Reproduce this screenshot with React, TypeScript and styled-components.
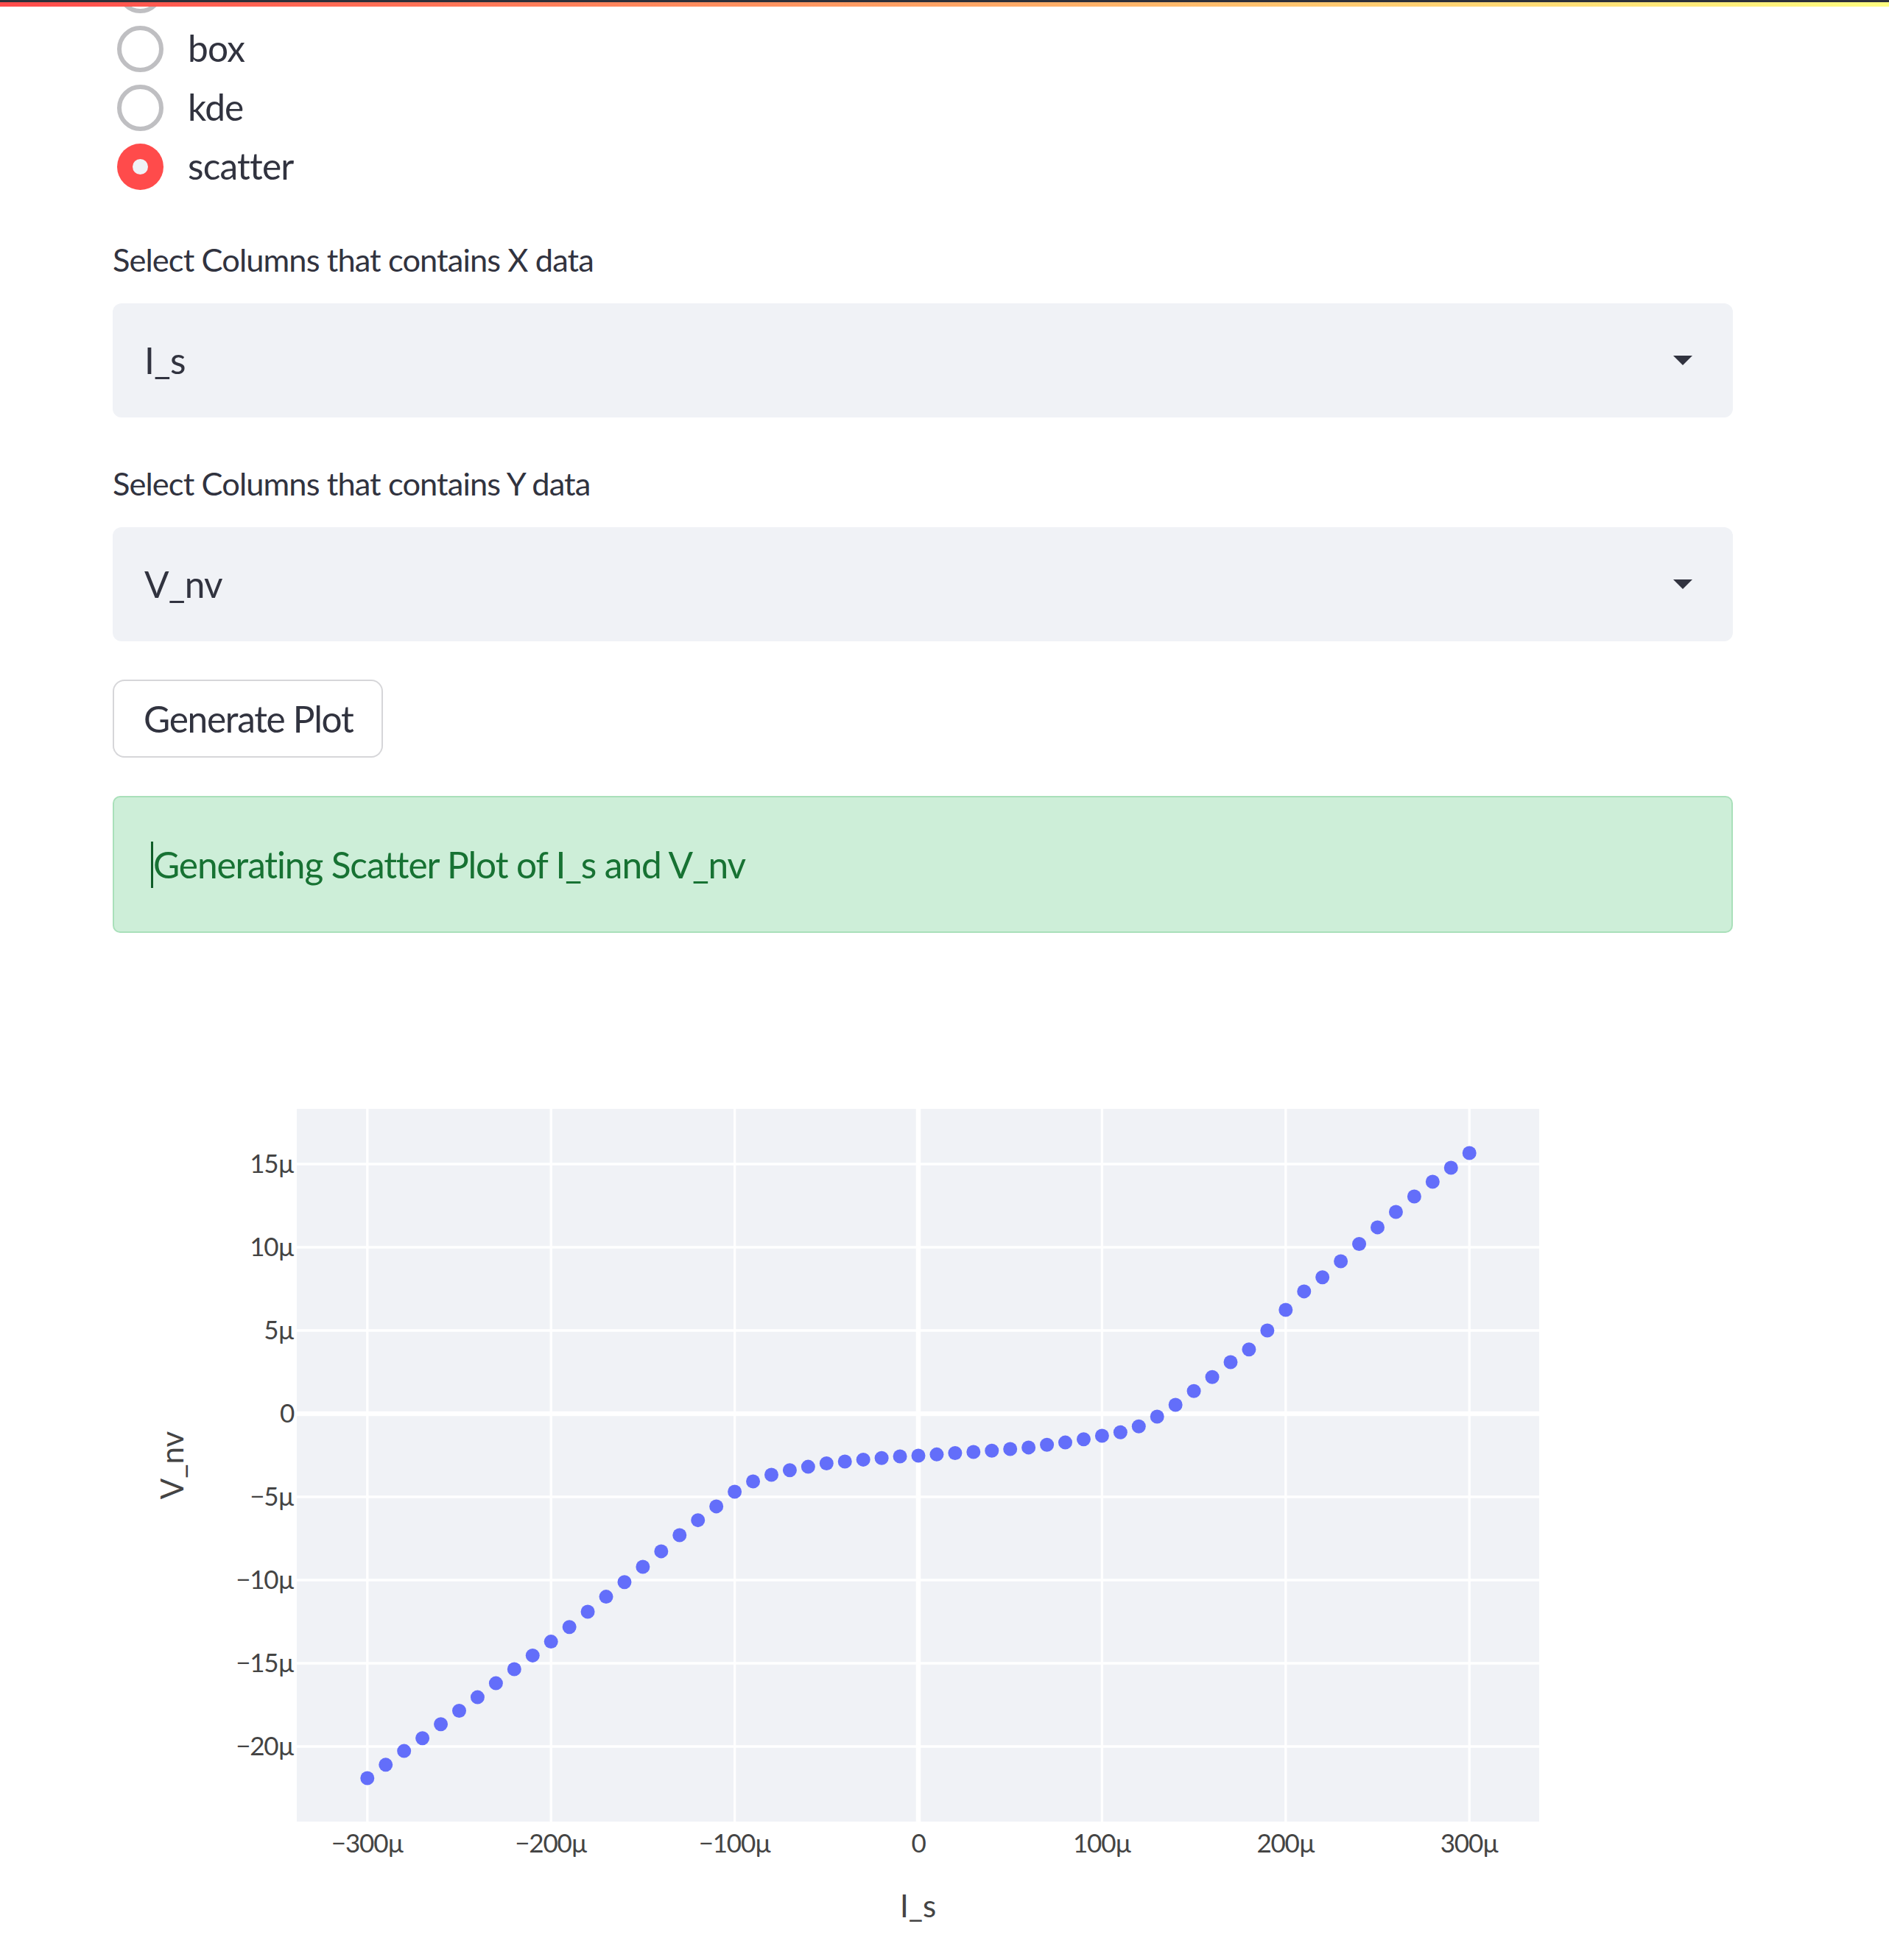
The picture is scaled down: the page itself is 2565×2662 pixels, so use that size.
import React from "react";
import styled, { createGlobalStyle } from "styled-components";

const GlobalStyle = createGlobalStyle`
  html, body { margin: 0; padding: 0; background: #ffffff; overflow: hidden; }
  body { font-family: Lato, "Liberation Sans", sans-serif; color: #31333f; }
  * { box-sizing: border-box; }
`;

const Decoration = styled.div`
  position: fixed;
  top: 0;
  left: 0;
  right: 0;
  z-index: 10;
  display: flex;
  flex-direction: column;
`;
const TopStrip = styled.div`
  height: 3px;
  background: #2e3039;
`;
const GradientStrip = styled.div`
  height: 6px;
  background: linear-gradient(90deg, #ff4b4b, #fffd80);
`;

const Main = styled.main`
  display: flex;
  flex-direction: column;
  align-items: flex-start;
  width: 2200px;
  margin-left: 153px;
`;

const RadioGroup = styled.div`
  display: flex;
  flex-direction: column;
  margin-top: -54px;
`;
const RadioItem = styled.label`
  display: flex;
  align-items: center;
  height: 80px;
  gap: 33px;
  padding-left: 6px;
  font-size: 49.6px;
  letter-spacing: -0.8px;
`;
const RadioCircle = styled.span<{ $checked?: boolean }>`
  width: 63px;
  height: 63px;
  border-radius: 50%;
  flex: none;
  display: flex;
  align-items: center;
  justify-content: center;
  background: ${(p) => (p.$checked ? "#ff4b4b" : "#ffffff")};
  border: ${(p) => (p.$checked ? "none" : "6px solid #bfbfc2")};
`;
const RadioDot = styled.span`
  width: 21px;
  height: 21px;
  border-radius: 50%;
  background: #f0f2f6;
`;
const RadioText = styled.span`
  line-height: 1;
  color: #31333f;
`;

const FieldLabel = styled.div<{ $top: number }>`
  margin-top: ${(p) => p.$top}px;
  height: 52px;
  line-height: 52px;
  font-size: 43.4px;
  letter-spacing: -0.9px;
  color: #31333f;
`;

const SelectBox = styled.div`
  margin-top: 34px;
  width: 100%;
  height: 155px;
  background: #f0f2f6;
  border-radius: 12px;
  display: flex;
  align-items: center;
  justify-content: space-between;
  padding: 0 55px 0 43px;
  font-size: 49.6px;
  letter-spacing: -0.8px;
  color: #31333f;
`;
const SelectValue = styled.span`
  line-height: 1;
`;
const CaretIcon = styled.svg`
  width: 26px;
  height: 13px;
  display: block;
`;

const Button = styled.button`
  margin-top: 52px;
  height: 106px;
  padding: 0 39px 0 40px;
  border: 2px solid rgba(49, 51, 63, 0.2);
  border-radius: 16px;
  background: #ffffff;
  font-family: inherit;
  font-size: 49.6px;
  letter-spacing: -1.3px;
  color: #31333f;
  display: inline-flex;
  align-items: center;
`;

const Alert = styled.div`
  margin-top: 52px;
  width: 100%;
  height: 186px;
  background: #cdeed8;
  border: 2px solid #a9e0ba;
  border-radius: 10px;
  padding-left: 50px;
  display: flex;
  align-items: center;
  color: #177233;
  font-size: 49.6px;
  letter-spacing: -1.1px;
`;
const TextCursor = styled.span`
  display: inline-block;
  width: 3px;
  height: 63px;
  background: #0f5d28;
`;

const Figure = styled.div`
  margin-top: 33px;
  width: 2200px;
  height: 1362px;
`;
const ChartSvg = styled.svg`
  display: block;
`;
const TickLabel = styled.text`
  font-family: Lato, "Liberation Sans", sans-serif;
  font-size: 35px;
  letter-spacing: -1.2px;
  fill: #444444;
`;
const AxisTitle = styled.text`
  font-family: Lato, "Liberation Sans", sans-serif;
  font-size: 42px;
  fill: #444444;
`;

const YS_DATA: number[] = [
  -21.9, -21.1, -20.27, -19.5, -18.66, -17.85, -17.04, -16.2, -15.35, -14.53,
  -13.7, -12.82, -11.9, -11.0, -10.12, -9.2, -8.27, -7.3, -6.4, -5.57,
  -4.69, -4.07, -3.67, -3.4, -3.19, -2.99, -2.88, -2.76, -2.67, -2.57,
  -2.52, -2.45, -2.37, -2.3, -2.22, -2.12, -2.03, -1.87, -1.73, -1.54,
  -1.33, -1.12, -0.76, -0.18, 0.53, 1.36, 2.2, 3.1, 3.86, 5.0,
  6.24, 7.35, 8.2, 9.16, 10.2, 11.2, 12.12, 13.05, 13.94, 14.78, 15.66,
];

const X0 = 1094;
const XS = 2.494;
const Y0 = 620;
const YS = 22.6;
const PLOT = { left: 250, right: 1937, top: 206, bottom: 1174 };

const xp = (v: number) => X0 + XS * v;
const yp = (v: number) => Y0 - YS * v;

const fmt = (v: number) => (v === 0 ? "0" : `${v < 0 ? "\u2212" : ""}${Math.abs(v)}\u00b5`);

function ScatterChart() {
  const xTicks = [-300, -200, -100, 0, 100, 200, 300];
  const yTicks = [-20, -15, -10, -5, 0, 5, 10, 15];
  return (
    <ChartSvg width={2200} height={1362} viewBox="0 0 2200 1362">
      <rect
        x={PLOT.left}
        y={PLOT.top}
        width={PLOT.right - PLOT.left}
        height={PLOT.bottom - PLOT.top}
        fill="#f0f2f6"
      />
      {xTicks.filter((t) => t !== 0).map((t) => (
        <line key={`gx${t}`} x1={xp(t)} x2={xp(t)} y1={PLOT.top} y2={PLOT.bottom} stroke="#ffffff" strokeWidth={3.3} />
      ))}
      {yTicks.filter((t) => t !== 0).map((t) => (
        <line key={`gy${t}`} x1={PLOT.left} x2={PLOT.right} y1={yp(t)} y2={yp(t)} stroke="#ffffff" strokeWidth={3.3} />
      ))}
      <line x1={xp(0)} x2={xp(0)} y1={PLOT.top} y2={PLOT.bottom} stroke="#ffffff" strokeWidth={6.5} />
      <line x1={PLOT.left} x2={PLOT.right} y1={yp(0)} y2={yp(0)} stroke="#ffffff" strokeWidth={6.5} />
      {YS_DATA.map((v, i) => (
        <circle key={i} cx={xp(-300 + i * 10)} cy={yp(v)} r={9.5} fill="#636efa" />
      ))}
      {xTicks.map((t) => (
        <TickLabel key={`lx${t}`} x={xp(t)} y={1216} textAnchor="middle">
          {fmt(t)}
        </TickLabel>
      ))}
      {yTicks.map((t) => (
        <TickLabel key={`ly${t}`} x={246} y={yp(t) + 12} textAnchor="end">
          {fmt(t)}
        </TickLabel>
      ))}
      <AxisTitle x={(PLOT.left + PLOT.right) / 2} y={1304} textAnchor="middle">
        I_s
      </AxisTitle>
      <AxisTitle
        x={0}
        y={0}
        textAnchor="middle"
        transform={`translate(96 ${(PLOT.top + PLOT.bottom) / 2}) rotate(-90)`}
      >
        V_nv
      </AxisTitle>
    </ChartSvg>
  );
}

function Caret() {
  return (
    <CaretIcon viewBox="0 0 26 13">
      <polygon points="0,0 26,0 13,13" fill="#31333f" />
    </CaretIcon>
  );
}

const options: { key: string; label?: string; checked?: boolean }[] = [
  { key: "hidden" },
  { key: "box", label: "box" },
  { key: "kde", label: "kde" },
  { key: "scatter", label: "scatter", checked: true },
];

export default function App() {
  return (
    <>
      <GlobalStyle />
      <Decoration>
        <TopStrip />
        <GradientStrip />
      </Decoration>
      <Main>
        <RadioGroup>
          {options.map((o) => (
            <RadioItem key={o.key}>
              <RadioCircle $checked={o.checked}>{o.checked && <RadioDot />}</RadioCircle>
              {o.label && <RadioText>{o.label}</RadioText>}
            </RadioItem>
          ))}
        </RadioGroup>
        <FieldLabel $top={60}>Select Columns that contains X data</FieldLabel>
        <SelectBox>
          <SelectValue>I_s</SelectValue>
          <Caret />
        </SelectBox>
        <FieldLabel $top={63}>Select Columns that contains Y data</FieldLabel>
        <SelectBox>
          <SelectValue>V_nv</SelectValue>
          <Caret />
        </SelectBox>
        <Button>Generate Plot</Button>
        <Alert>
          <TextCursor />
          Generating Scatter Plot of I_s and V_nv
        </Alert>
        <Figure>
          <ScatterChart />
        </Figure>
      </Main>
    </>
  );
}
